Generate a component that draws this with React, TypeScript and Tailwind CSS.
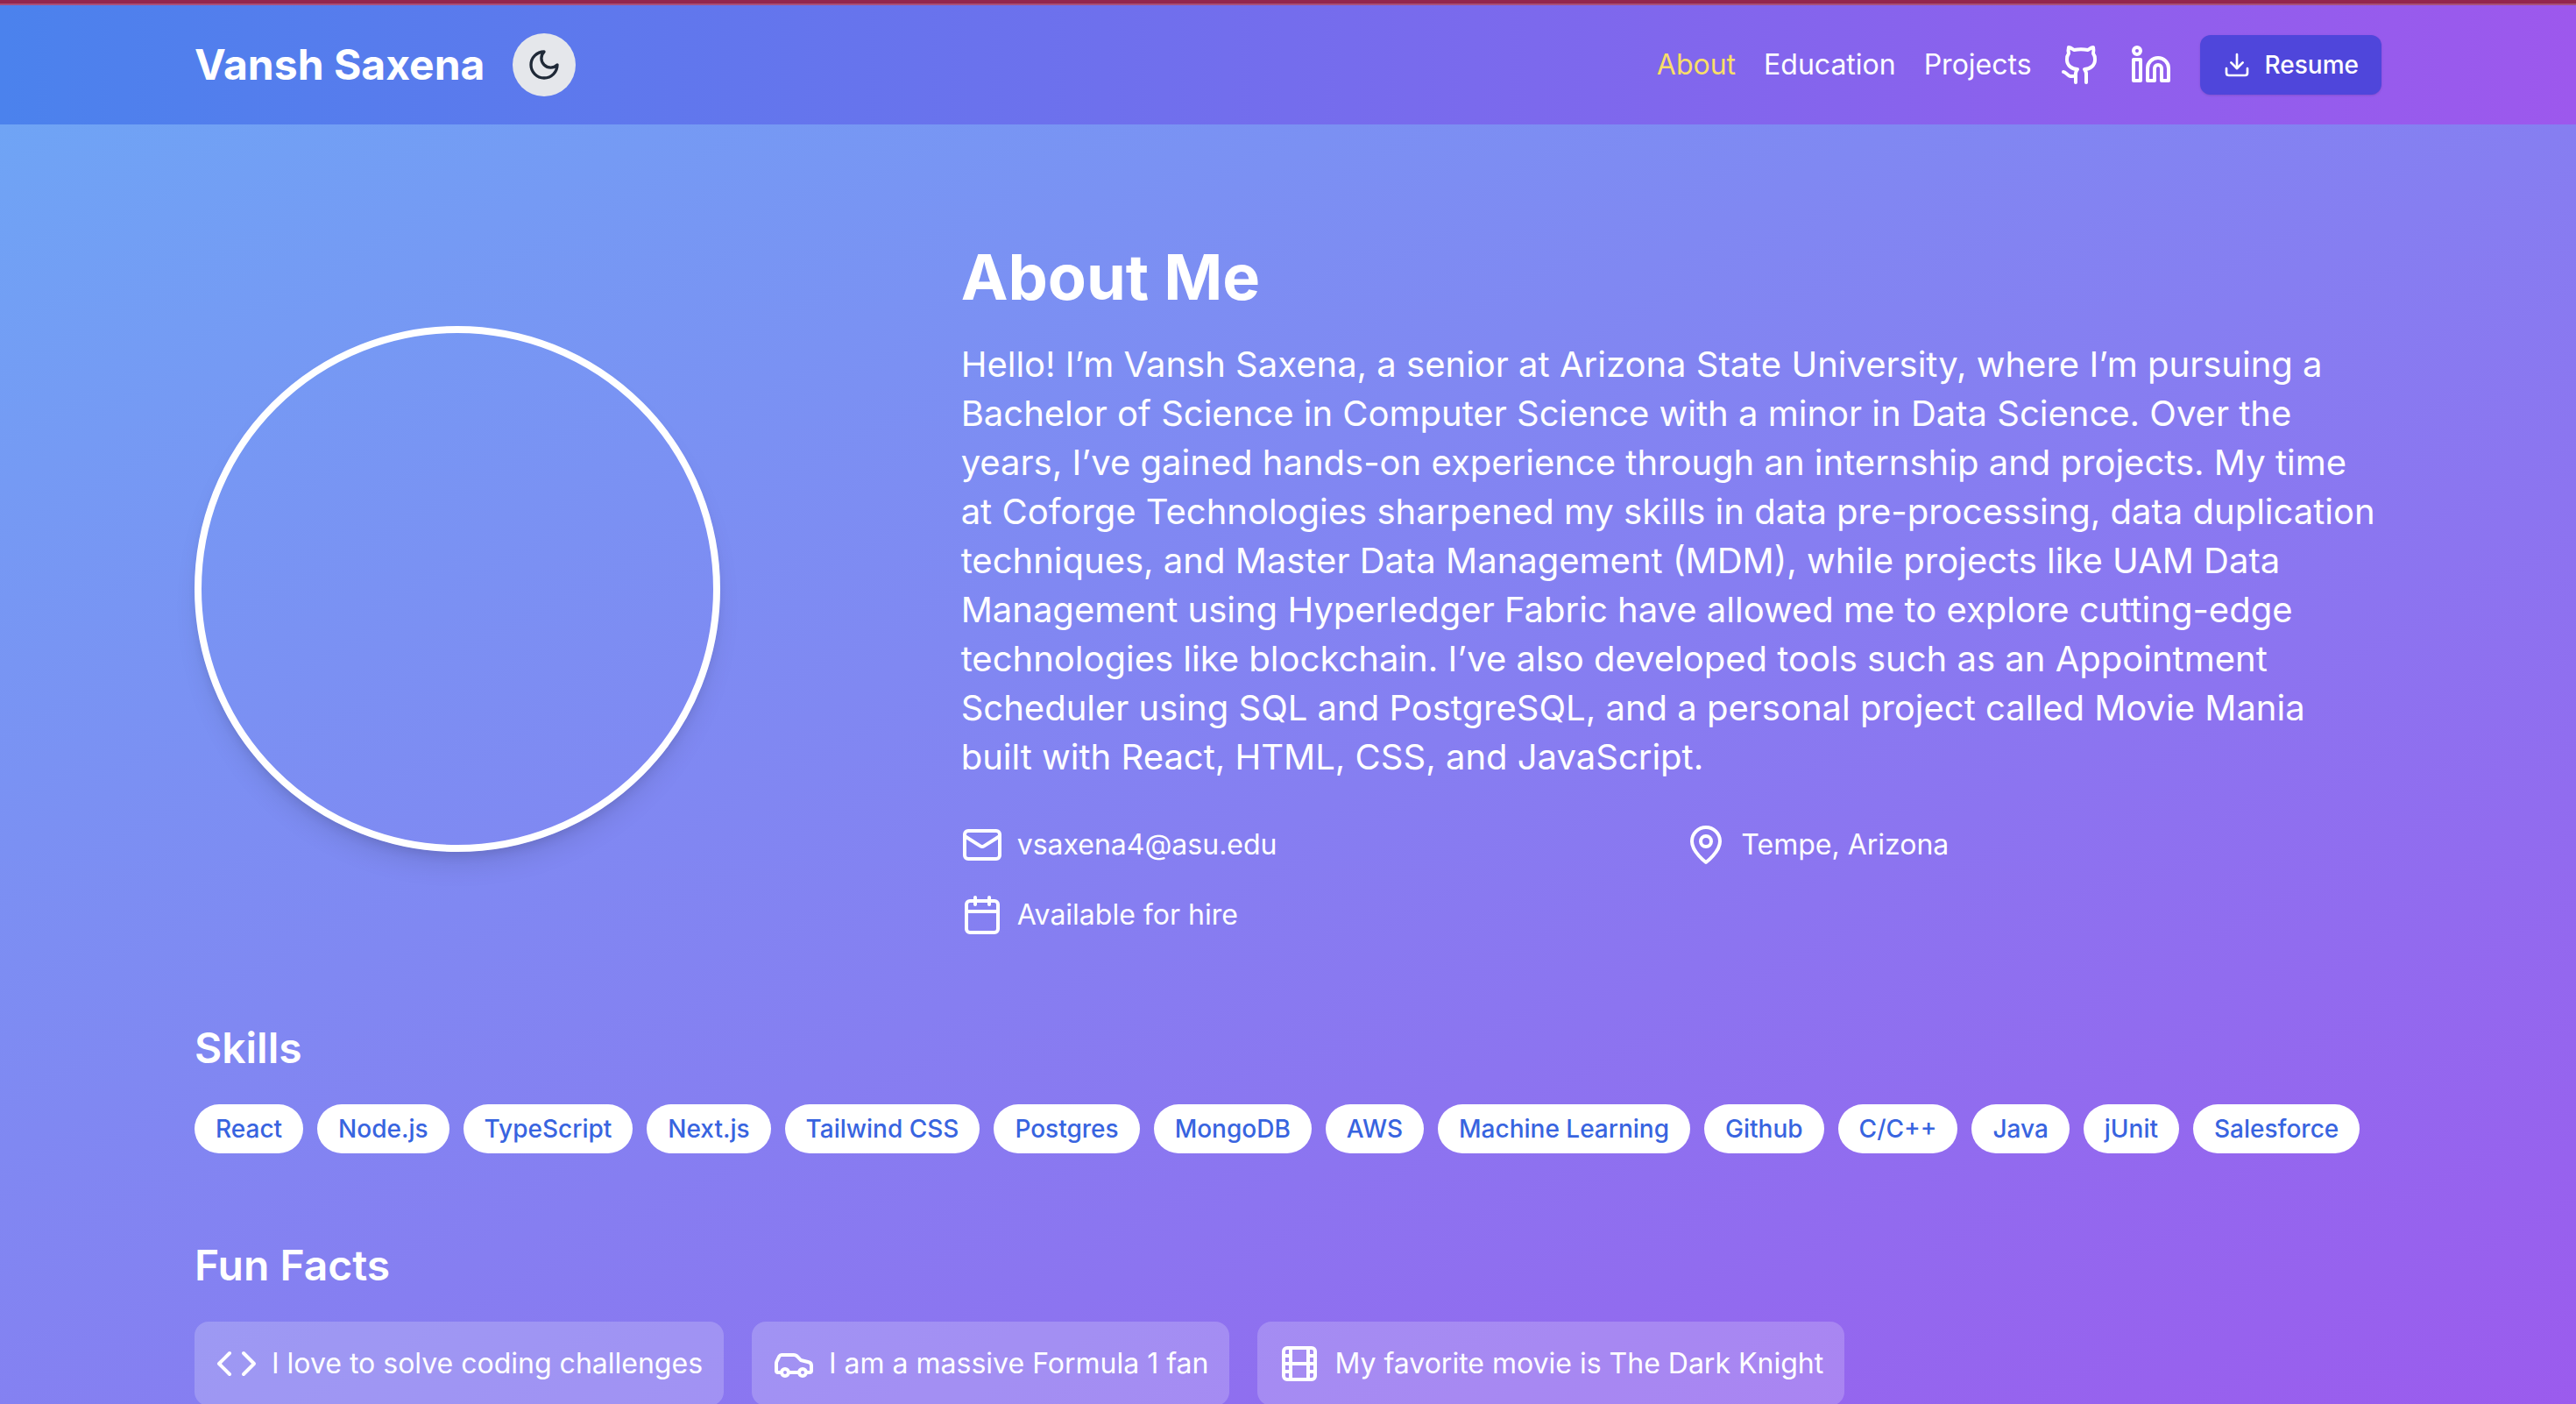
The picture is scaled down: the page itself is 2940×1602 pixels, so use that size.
import type { ReactNode } from "react";
import { Calendar, Car, Code, Download, Film, Github, Linkedin } from "lucide-react";

function StrokeIcon({ className, children }: { className?: string; children: ReactNode }) {
  return (
    <svg
      viewBox="0 0 24 24"
      fill="none"
      stroke="currentColor"
      strokeWidth={2}
      strokeLinecap="round"
      strokeLinejoin="round"
      aria-hidden="true"
      className={className}
    >
      {children}
    </svg>
  );
}

function Moon({ className }: { className?: string }) {
  return (
    <StrokeIcon className={className}>
      <path d="M12 3a6 6 0 0 0 9 9 9 9 0 1 1-9-9Z" />
    </StrokeIcon>
  );
}

function Mail({ className }: { className?: string }) {
  return (
    <StrokeIcon className={className}>
      <rect width="20" height="16" x="2" y="4" rx="2" />
      <path d="m22 7-8.97 5.7a1.94 1.94 0 0 1-2.06 0L2 7" />
    </StrokeIcon>
  );
}

function MapPin({ className }: { className?: string }) {
  return (
    <StrokeIcon className={className}>
      <path d="M20 10c0 6-8 12-8 12s-8-6-8-12a8 8 0 0 1 16 0Z" />
      <circle cx="12" cy="10" r="3" />
    </StrokeIcon>
  );
}

const navLinks = [
  { label: "About", href: "#about", active: true },
  { label: "Education", href: "#education", active: false },
  { label: "Projects", href: "#projects", active: false },
];

const skills = [
  "React",
  "Node.js",
  "TypeScript",
  "Next.js",
  "Tailwind CSS",
  "Postgres",
  "MongoDB",
  "AWS",
  "Machine Learning",
  "Github",
  "C/C++",
  "Java",
  "jUnit",
  "Salesforce",
];

const contacts = [
  { icon: Mail, text: "vsaxena4@asu.edu" },
  { icon: MapPin, text: "Tempe, Arizona" },
  { icon: Calendar, text: "Available for hire" },
];

const facts = [
  { icon: Code, text: "I love to solve coding challenges" },
  { icon: Car, text: "I am a massive Formula 1 fan" },
  { icon: Film, text: "My favorite movie is The Dark Knight" },
];

function Header() {
  return (
    <header className="shrink-0 bg-linear-to-r/srgb from-[#4b82ed] to-[#9d58ed]">
      <div className="mx-auto flex max-w-[2560px] items-center justify-between p-8">
        <div className="flex items-center gap-8">
          <span className="text-[48px] leading-[64px] font-bold">Vansh Saxena</span>
          <button
            type="button"
            aria-label="Toggle dark mode"
            className="rounded-full bg-[#e5e7eb] p-4 text-[#1f2937]"
          >
            <Moon className="size-10" />
          </button>
        </div>
        <nav className="flex items-center gap-8 text-[32px] leading-[48px]">
          {navLinks.map((link) => (
            <a key={link.label} href={link.href} className={link.active ? "text-[#f9de68]" : "text-white"}>
              {link.label}
            </a>
          ))}
          <a href="#github" aria-label="GitHub">
            <Github className="size-12" />
          </a>
          <a href="#linkedin" aria-label="LinkedIn">
            <Linkedin className="size-12" />
          </a>
          <a
            href="#resume"
            className="inline-flex items-center gap-4 rounded-[12px] border-2 border-transparent bg-[#4f46db] px-6 py-4 text-[28px] leading-8 font-medium shadow-sm"
          >
            <Download className="size-8" />
            Resume
          </a>
        </nav>
      </div>
    </header>
  );
}

export default function App() {
  return (
    <div className="flex h-screen flex-col overflow-hidden font-['Inter',sans-serif] text-white">
      <div className="h-1.5 shrink-0 border-b-2 border-[#a8507a] bg-[#93264d]" />
      <Header />
      <main className="shrink-0 grow bg-linear-to-br/srgb from-[#6fa4f5] to-[#9d58ed]">
        <div className="mx-auto flex max-w-[2560px] flex-col gap-24 px-8 pt-[134px] pb-32">
          <section id="about" className="grid grid-cols-3 items-center gap-32">
            <div className="size-[600px] rounded-full border-8 border-white shadow-[0_20px_30px_-6px_rgba(0,0,0,0.1),0_8px_12px_-4px_rgba(0,0,0,0.1)]" />
            <div className="col-span-2">
              <h1 className="mb-8 text-[72px] leading-[80px] font-bold">About Me</h1>
              <p className="mb-12 text-[40px] leading-[56px]">
                Hello! I’m Vansh Saxena, a senior at Arizona State University, where I’m pursuing a Bachelor of Science
                in Computer Science with a minor in Data Science. Over the years, I’ve gained hands-on experience
                through an internship and projects. My time at Coforge Technologies sharpened my skills in data
                pre-processing, data duplication techniques, and Master Data Management (MDM), while projects like UAM
                Data Management using Hyperledger Fabric have allowed me to explore cutting-edge technologies like
                blockchain. I’ve also developed tools such as an Appointment Scheduler using SQL and PostgreSQL, and a
                personal project called Movie Mania built with React, HTML, CSS, and JavaScript.
              </p>
              <ul className="grid grid-cols-2 gap-8 text-[32px] leading-[48px]">
                {contacts.map(({ icon: Icon, text }) => (
                  <li key={text} className="flex items-center gap-4">
                    <Icon className="size-12" />
                    {text}
                  </li>
                ))}
              </ul>
            </div>
          </section>

          <section>
            <h2 className="mb-8 text-[48px] leading-[64px] font-semibold">Skills</h2>
            <ul className="flex flex-wrap gap-4">
              {skills.map((skill) => (
                <li
                  key={skill}
                  className="rounded-full bg-white px-6 py-2 text-[28px] leading-10 font-medium text-[#3864e0]"
                >
                  {skill}
                </li>
              ))}
            </ul>
          </section>

          <section>
            <h2 className="mb-8 text-[48px] leading-[64px] font-semibold">Fun Facts</h2>
            <ul className="flex flex-wrap gap-8 text-[32px] leading-[48px]">
              {facts.map(({ icon: Icon, text }) => (
                <li key={text} className="flex items-center gap-4 rounded-2xl bg-white/20 p-6">
                  <Icon className="size-12" />
                  {text}
                </li>
              ))}
            </ul>
          </section>
        </div>
      </main>
    </div>
  );
}
